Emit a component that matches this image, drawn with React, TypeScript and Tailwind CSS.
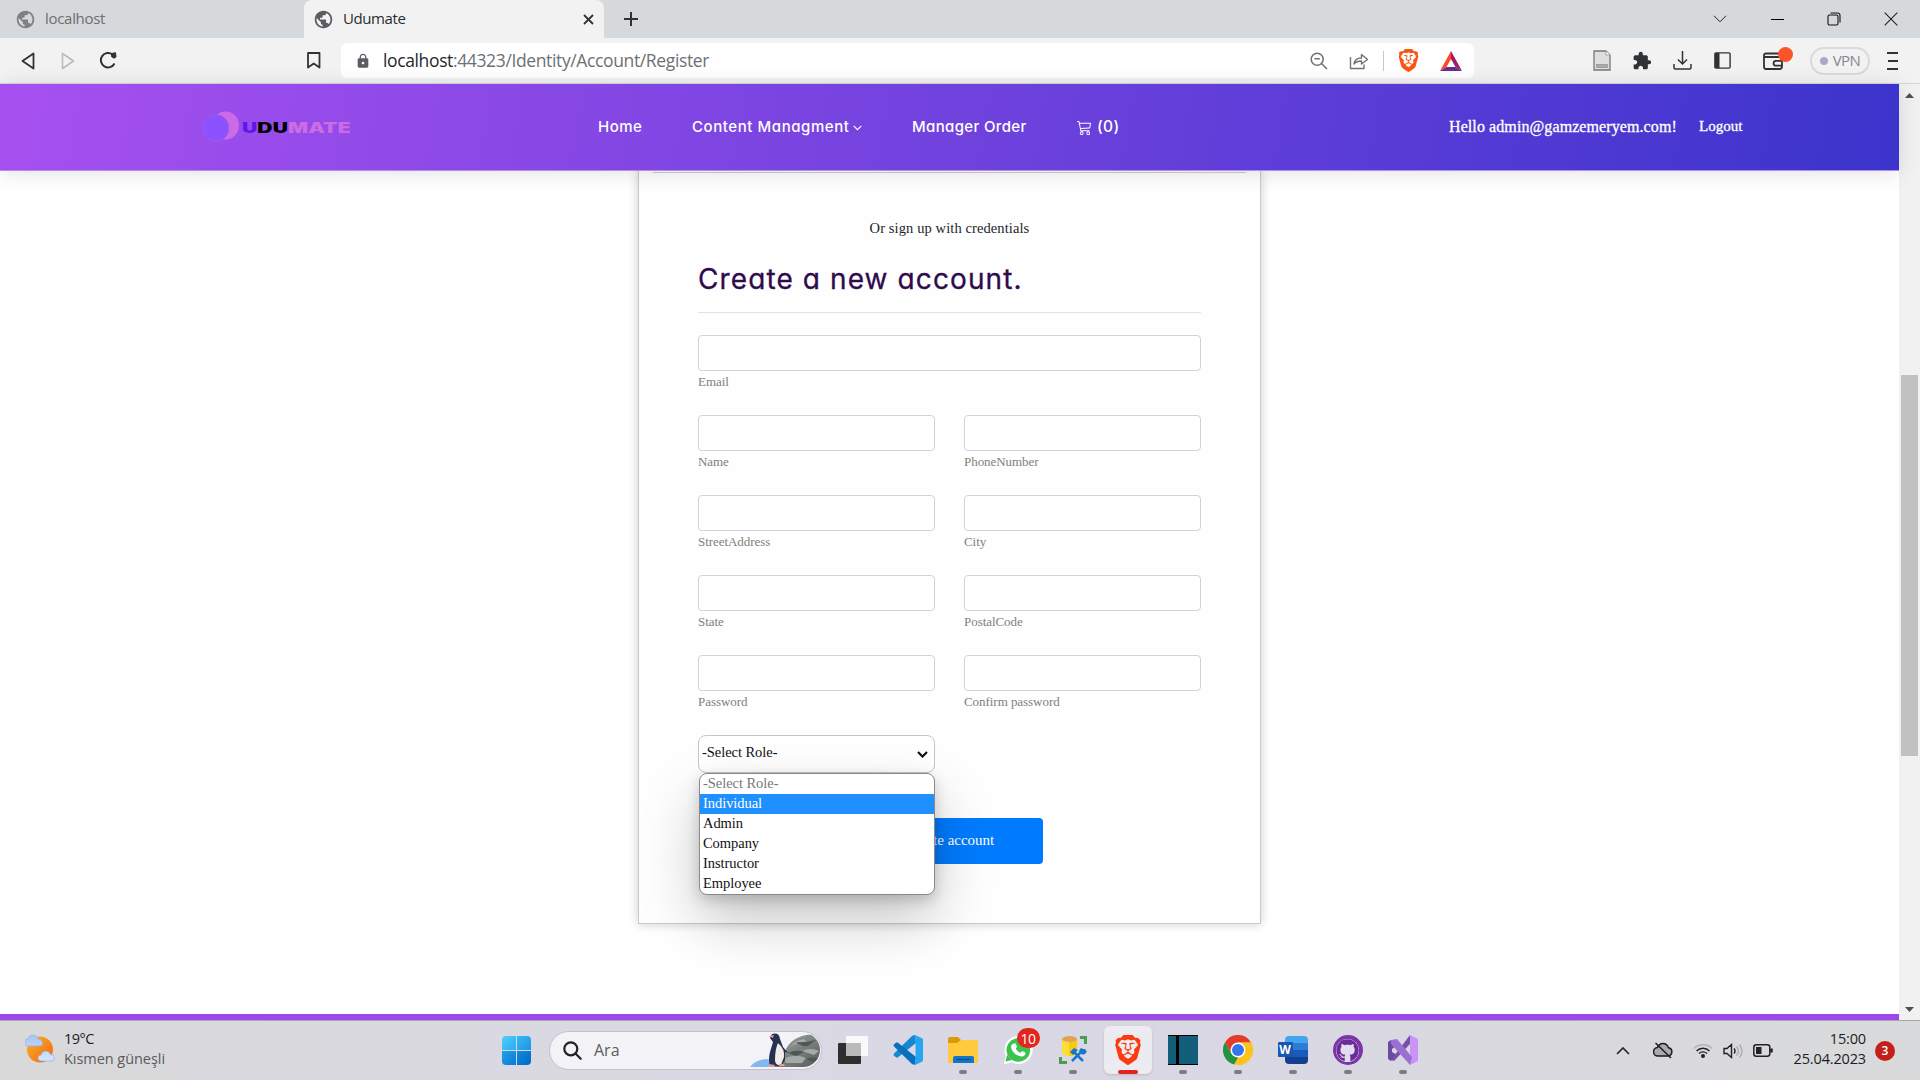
import React from "react";
import { MdPublic, MdLock, MdExtension } from "react-icons/md";
import { SiBrave } from "react-icons/si";
import { FaGithub } from "react-icons/fa";
import { BsCart3 } from "react-icons/bs";

function Cell({ w, children }: { w: string; children?: React.ReactNode }) {
  return <div className={`flex h-full shrink-0 items-center justify-center ${w}`}>{children}</div>;
}

function TabStrip() {
  return (
    <div className="flex h-[38px] bg-[#d5d9dc] font-['Open_Sans',sans-serif] text-[15px]">
      <div className="flex w-[304px] items-center pl-[15px] text-[#6b6e70]">
        <MdPublic className="size-[21px] text-[#7f8081]" />
        <span className="-mt-px ml-[9px] tracking-[-0.3px]">localhost</span>
      </div>
      <div className="flex w-[300px] items-center rounded-t-lg bg-[#f2f2f2] pl-[9px] text-[#2a2d30]">
        <MdPublic className="size-[21px] text-[#5a5e63]" />
        <span className="-mt-px ml-[9px] tracking-[-0.4px]">Udumate</span>
        <svg className="ml-auto mr-[10px]" width="11" height="11" viewBox="0 0 11 11" stroke="#303336" strokeWidth="1.8">
          <path d="M1 1l9 9M10 1l-9 9" />
        </svg>
      </div>
      <Cell w="w-[54px]">
        <svg width="14" height="14" viewBox="0 0 14 14" stroke="#303336" strokeWidth="2">
          <path d="M7 0v14M0 7h14" />
        </svg>
      </Cell>
      <div className="ml-auto flex">
        <Cell w="w-[56px]">
          <svg width="14" height="8" viewBox="0 0 14 8" fill="none" stroke="#222">
            <path d="M1 .8l6 6 6-6" />
          </svg>
        </Cell>
        <Cell w="w-[58px]"><div className="h-px w-[13px] bg-black" /></Cell>
        <Cell w="w-[56px]">
          <svg width="14" height="14" viewBox="0 0 14 14" fill="none" stroke="#111" strokeWidth="1.1">
            <rect x="1" y="3" width="10" height="10" rx="1.5" />
            <path d="M3.5 1h7A2.5 2.5 0 0 1 13 3.500v7" />
          </svg>
        </Cell>
        <Cell w="w-[58px]">
          <svg width="14" height="14" viewBox="0 0 14 14" stroke="#222" strokeWidth="1.1">
            <path d="M.7.7l12.600 12.600M13.300.7L.7 13.300" />
          </svg>
        </Cell>
      </div>
    </div>
  );
}

function Toolbar() {
  return (
    <div className="flex h-[46px] items-center border-b border-[#d3d6da] bg-[#f2f2f2] font-['Open_Sans',sans-serif]">
      <div className="w-[8px]" />
      <Cell w="w-[40px]">
        <svg width="14" height="18" viewBox="0 0 14 18" fill="none" stroke="#303336" strokeWidth="1.8" strokeLinejoin="round">
          <path d="M12.500 1.500v15L1.500 9z" />
        </svg>
      </Cell>
      <Cell w="w-[40px]">
        <svg width="14" height="18" viewBox="0 0 14 18" fill="none" stroke="#b9bbbd" strokeWidth="1.600" strokeLinejoin="round">
          <path d="M1.500 1.500v15L12.500 9z" />
        </svg>
      </Cell>
      <Cell w="w-[40px]">
        <svg className="-mt-[2px]" width="18" height="18" viewBox="0 0 18 18" fill="none" stroke="#303336" strokeWidth="2">
          <path d="M15.500 12.500A7.200 7.200 0 1 1 13.500 3.500" />
          <path d="M12.500 2.500l4-.8.500 4-1.500 1.500-2.700-1.200z" fill="#303336" strokeWidth="1" />
        </svg>
      </Cell>
      <div className="w-[166px]" />
      <Cell w="w-[39px]">
        <svg width="14" height="17" viewBox="0 0 14 17" fill="none" stroke="#303336" strokeWidth="1.800" strokeLinejoin="round">
          <path d="M1 1h11.500v14.500L6.750 11.500 1 15.500z" />
        </svg>
      </Cell>
      <div className="ml-[8px] flex h-[35px] w-[1133px] items-center rounded-md bg-white">
        <div className="ml-[13px] flex w-[18px] justify-center">
          <MdLock className="size-[16px] text-[#5a5e63]" />
        </div>
        <span className="ml-[11px] text-[17.5px] tracking-[-0.37px] text-[#6d7175]">
          <span className="text-[#25282b]">localhost</span>:44323/Identity/Account/Register
        </span>
        <div className="ml-auto flex h-full items-center">
          <Cell w="w-[40px]">
            <svg width="18" height="18" viewBox="0 0 18 18" fill="none" stroke="#707376" strokeWidth="1.500">
              <circle cx="7.200" cy="7.200" r="6" />
              <path d="M11.500 11.500l5.500 5.500M4.500 6.800h5.400" />
            </svg>
          </Cell>
          <Cell w="w-[40px]">
            <svg width="20" height="18" viewBox="0 0 20 18" fill="none" stroke="#707376" strokeWidth="1.400" strokeLinejoin="round">
              <path d="M1.500 5v11.500h13.500v-4M5 12c.5-4.500 3-6 7.500-6V2.500l6 5-6 4.500V9C9 9 7 9.500 5 12z" />
            </svg>
          </Cell>
          <div className="mx-[4px] h-[20px] w-px bg-[#c6c8ca]" />
          <Cell w="w-[40px]"><SiBrave className="size-[23px] text-[#fb5415]" /></Cell>
          <Cell w="w-[46px]">
            <svg width="22" height="20" viewBox="0 0 22 20">
              <path d="M11 0L0 20l6.500-4L11 8z" fill="#ff4724" />
              <path d="M11 0l11 20-6.500-4L11 8z" fill="#9e1f63" />
              <path d="M0 20h22l-6.500-4h-9z" fill="#662d91" />
            </svg>
          </Cell>
        </div>
      </div>
      <div className="w-[108px]" />
      <Cell w="w-[40px]">
        <svg width="18" height="21" viewBox="0 0 18 21">
          <path d="M1 1h12l4 4v15H1z" fill="#dedede" stroke="#777" strokeWidth="1.300" />
          <rect x="3.500" y="14.500" width="11" height="3" fill="#aaa" stroke="#888" strokeWidth=".6" />
          <path d="M13 1v4h4" fill="#fff" stroke="#888" strokeWidth=".7" />
        </svg>
      </Cell>
      <Cell w="w-[40px]"><MdExtension className="size-[20px] text-[#303336]" /></Cell>
      <Cell w="w-[40px]">
        <svg width="19" height="19" viewBox="0 0 19 19" fill="none" stroke="#303336" strokeWidth="1.500">
          <path d="M9.500 0v12.500M5 8.500l4.500 4.500L14 8.500M1 13v3.500q0 1.500 1.500 1.500h14q1.500 0 1.500-1.500V13" />
        </svg>
      </Cell>
      <Cell w="w-[40px]">
        <svg width="17" height="17" viewBox="0 0 17 17">
          <rect x=".9" y=".9" width="15.200" height="15.200" rx="1" fill="none" stroke="#303336" strokeWidth="1.400" />
          <path d="M1 1h4.500v15H1z" fill="#303336" />
        </svg>
      </Cell>
      <div className="relative ml-[16px] flex w-[30px] justify-center">
        <svg width="20" height="18" viewBox="0 0 20 18" fill="none" stroke="#303336" strokeWidth="1.800">
          <path d="M19 6v-2.500q0-2-2-2H3Q1 1.500 1 3.500v11q0 2.500 2 2.500h13.500q2.500 0 2.500-2.500M1 5h17M19 8.800h-6a2.400 2.400 0 0 0 0 4.900h6z" />
        </svg>
        <div className="absolute -top-[5px] left-[20px] size-[15px] rounded-full bg-[#fb542b]" />
      </div>
      <div className="ml-[22px] flex h-[28px] w-[60px] items-center justify-center gap-[5px] rounded-full border-2 border-[#d8dadc] text-[15px] text-[#85888d]">
        <span className="size-[8px] shrink-0 rounded-full bg-[#a9abc2]" />
        <span className="-mt-px tracking-[-0.6px]">VPN</span>
      </div>
      <div className="ml-[17px] flex w-[11px] flex-col gap-[6px]">
        <div className="h-[2px] bg-[#303336]" />
        <div className="ml-px h-[2px] bg-[#303336]" />
        <div className="h-[2px] bg-[#303336]" />
      </div>
    </div>
  );
}

function SiteHeader() {
  return (
    <header className="relative z-10 flex h-[87px] shrink-0 items-center border-b border-[#b18df0] bg-[linear-gradient(100deg,#a750f0_0%,#3b34cc_100%)] shadow-[0_2px_20px_rgba(0,0,0,0.12)]">
      <div className="ml-[203px] flex w-[395px] items-center">
        <svg width="37" height="32" viewBox="0 0 37 32">
          <ellipse cx="22.500" cy="14.500" rx="13.500" ry="14" fill="#cb6ce6" />
          <ellipse cx="13" cy="17" rx="12.800" ry="13.500" fill="#8c52ff" stroke="#9c5be8" />
        </svg>
        <span className="ml-[2px] origin-left scale-x-[1.5] font-['Inter',sans-serif] text-[14px] font-black tracking-[0.1px] text-[#cb6ce6]">
          <span className="text-[#5e17eb]">U</span><span className="text-black">DU</span>MATE
        </span>
      </div>
      <nav className="flex items-center font-['Inter',sans-serif] text-[15px] font-medium whitespace-nowrap text-white [font-feature-settings:'cv11']">
        <span className="w-[94px] tracking-[0.5px]">Home</span>
        <span className="flex w-[220px] items-center gap-[3px] tracking-[0.57px]">
          Content Managment
          <svg className="mt-[2px]" width="9" height="6" viewBox="0 0 9 6" fill="none" stroke="#fff" strokeWidth="1.200"><path d="M.7.8l3.800 3.800L8.300.8" /></svg>
        </span>
        <span className="w-[165px] tracking-[0.35px]">Manager Order</span>
        <span className="flex items-center gap-[5px]">
          <BsCart3 className="size-[15px]" /><span className="-mt-px text-[15.500px] tracking-[0.4px]">(0)</span>
        </span>
      </nav>
      <div className="ml-auto flex w-[450px] items-center font-['Liberation_Serif',serif] text-[16px] whitespace-nowrap text-white [-webkit-text-stroke:0.3px_white]">
        <span className="w-[250px] tracking-[0.09px]">Hello admin@gamzemeryem.com!</span>
        <span className="-mt-[2px] text-[15px]">Logout</span>
      </div>
    </header>
  );
}

function Field({ label }: { label: string }) {
  return (
    <div className="h-[80px] flex-1">
      <div className="h-[36px] rounded border border-[#ced4da] bg-white" />
      <div className="mt-[2px] text-[13px] leading-[18px] tracking-[-0.05px] text-[#808080]">{label}</div>
    </div>
  );
}

const pairs = [
  ["Name", "PhoneNumber"],
  ["StreetAddress", "City"],
  ["State", "PostalCode"],
  ["Password", "Confirm password"],
];
const roles = ["Admin", "Company", "Instructor", "Employee"];

function RegisterCard() {
  return (
    <section className="mx-auto h-[753px] w-[623px] border border-t-0 border-[#c9c9c9] bg-[#fefefe] font-['Liberation_Serif',serif] shadow-[0_0_10px_rgba(0,0,0,0.2)]">
      <div className="mx-[14px] mt-px h-px bg-[#cfcfcf]" />
      <p className="mt-[44px] text-center text-[14.500px] leading-[22px] tracking-[0.1px] text-[#212529]">Or sign up with credentials</p>
      <div className="mx-[59px]">
        <h1 className="mt-[22px] font-['Inter',sans-serif] text-[28px] leading-[36px] font-normal tracking-[1.1px] whitespace-nowrap text-[#2f0a4c] [-webkit-text-stroke:0.3px_#2f0a4c] [font-feature-settings:'cv11']">Create a new account.</h1>
        <div className="mt-[15px] h-px bg-[#e3e3e3]" />
        <div className="mt-[22px] flex"><Field label="Email" /></div>
        {pairs.map(([a, b]) => (
          <div key={a} className="flex gap-[29px]">
            <Field label={a} />
            <Field label={b} />
          </div>
        ))}
        <div className="relative flex h-[38px] w-[237px] items-center rounded-lg border border-[#c6c6c6] bg-white pr-[6px] pl-[3px] text-[14.500px] text-[#111]">
          <span className="-mt-[2px] tracking-[-0.05px]">-Select Role-</span>
          <svg className="ml-auto" width="11" height="7" viewBox="0 0 11 7" fill="none" stroke="#111" strokeWidth="2.200"><path d="M1 1l4.500 4.500L10 1" /></svg>
          <div className="absolute top-[37px] left-0 z-10 h-[122px] w-[236px] rounded-lg border border-[#8a8a8a] bg-white leading-[18px] tracking-[-0.05px] shadow-[0_26px_58px_rgba(0,0,0,0.22),0_5px_14px_rgba(0,0,0,0.18)]">
            <div className="h-[20px] px-[3px] text-[#777]">-Select Role-</div>
            <div className="h-[20px] bg-[#1e90ff] px-[3px] text-white">Individual</div>
            {roles.map((r) => (
              <div key={r} className="h-[20px] px-[3px]">{r}</div>
            ))}
          </div>
        </div>
        <div className="mx-auto mt-[45px] flex h-[46px] w-[187px] items-center justify-center rounded bg-[#007bff] pb-[2px] text-[15px] text-white">Create account</div>
      </div>
    </section>
  );
}

function ScrollBar() {
  return (
    <div className="flex w-[21px] flex-col items-center bg-[#f1f1f1]">
      <svg className="mt-[9px]" width="9" height="5" viewBox="0 0 9 5"><path d="M0 5l4.500-5L9 5z" fill="#505050" /></svg>
      <div className="mt-[277px] h-[381px] w-[17px] bg-[#c1c1c1]" />
      <svg className="mt-auto mb-[8px]" width="9" height="5" viewBox="0 0 9 5"><path d="M0 0l4.500 5L9 0z" fill="#505050" /></svg>
    </div>
  );
}

function TaskApp({ children, active, off }: { children: React.ReactNode; active?: boolean; off?: boolean }) {
  return (
    <div className="flex h-full w-[55px] justify-center">
      <div className={active ? "mt-[5px] flex h-[48px] w-[48px] flex-col items-center rounded-md bg-[#ecebf2] pt-[9px] shadow-sm" : "mt-[5px] flex h-[48px] w-[48px] flex-col items-center pt-[9px]"}>
        {children}
        {!off && <div className={active ? "mt-[5px] h-[4px] w-[20px] rounded-full bg-[#e0261d]" : "mt-[5px] h-[4px] w-[8px] rounded-full bg-[#7e7c83]"} />}
      </div>
    </div>
  );
}

function Penguin() {
  return (
    <svg width="70" height="34" viewBox="0 0 70 34">
      <defs>
        <linearGradient id="rock" x1="0" y1="0" x2="1" y2="1">
          <stop offset="0" stopColor="#a5aaa7" /><stop offset=".5" stopColor="#7b817e" /><stop offset="1" stopColor="#565b5a" />
        </linearGradient>
      </defs>
      <path d="M0 34q6-8 18-8l8 8z" fill="#85b8f0" />
      <path d="M24 34q2-8 10-12Q37 8 52 3q9-3 16 0l2 5v26z" fill="url(#rock)" />
      <path d="M40 14q8-6 18-4l-4-4q-10 2-14 8M34 26q10-6 22-1l-4 5H36zM52 18q9-4 17 0l-5 4z" fill="#a5aaa7" />
      <path d="M46 9q8 1 20-2l-8 6q-7 1-12-4M38 20q8-4 16-1l-8 4zM56 26q6-3 13 0l-6 3z" fill="#505654" />
      <path d="M22 1q7-2 8 5l3 8q4 5 6 6l-4-1v8l-4 6H20q-2-6 0-14l3-10-3-4z" fill="#26304f" />
      <path d="M28 10q7 6 6 14l-3 8q-6 1-6-5 0-11 3-17z" fill="#f1ece8" />
      <path d="M19 3l5-1-1 3zM19 31l6 1-1 2h-5zM29 31l5 0 1 2h-6z" fill="#e79a8d" />
    </svg>
  );
}

function Taskbar() {
  return (
    <footer className="flex h-[60px] items-center border-t border-[#a9a7aa] bg-[linear-gradient(90deg,#d9d9da_0%,#dad9e2_30%,#dad7e5_60%,#d9d9de_80%,#d9dadb_100%)] font-['Open_Sans',sans-serif]">
      <div className="flex w-[502px] items-center pl-[25px]">
        <svg className="-mt-[4px]" width="31" height="30" viewBox="0 0 31 30">
          <defs>
            <linearGradient id="sun" x1="0" y1="0" x2="1" y2="1"><stop stopColor="#f7b52c" /><stop offset="1" stopColor="#f4640d" /></linearGradient>
            <linearGradient id="cl" x1="0" y1="0" x2="0" y2="1"><stop stopColor="#a8c4ee" /><stop offset="1" stopColor="#d7e6ff" /></linearGradient>
          </defs>
          <circle cx="15" cy="15.500" r="13" fill="url(#sun)" />
          <path d="M3 12a3.500 3.500 0 0 1 0-7Q4 1 8 1t5 4q4 0 4.500 3.500T14 12zM16 27a3 3 0 0 1 0-6q1-4 5-4 3 0 4.500 3.500 4 0 4 3.200T26 27z" fill="url(#cl)" stroke="#8fb0e6" strokeWidth=".7" />
        </svg>
        <div className="-mt-[3px] ml-[8px] text-[14.500px] leading-[20px] text-[#1c1c1c]">
          <div className="tracking-[-0.5px]">19°C</div>
          <div className="tracking-[-0.05px] text-[#5a5a5c]">Kısmen güneşli</div>
        </div>
      </div>
      <div className="grid size-[29px] grid-cols-2 gap-px">
        <div className="rounded-tl-sm bg-linear-to-br from-[#4fd0fb] to-[#2aaaf0]" />
        <div className="rounded-tr-sm bg-linear-to-br from-[#38b9f3] to-[#1c94e2]" />
        <div className="rounded-bl-sm bg-linear-to-br from-[#22a2ea] to-[#0979d4]" />
        <div className="rounded-br-sm bg-linear-to-br from-[#138bdc] to-[#0068c8]" />
      </div>
      <div className="-mt-px ml-[18px] flex h-[39px] w-[273px] items-center rounded-full border border-[#c3c1cb] bg-[#f3f3f7] pl-[13px]">
        <svg width="19" height="19" viewBox="0 0 19 19" fill="none" stroke="#222" strokeWidth="2.200" strokeLinecap="round"><circle cx="7.800" cy="7.800" r="6.500" /><path d="M12.700 12.700l5 5" /></svg>
        <span className="ml-[12px] text-[16px] text-[#5c5c60]">Ara</span>
        <div className="mr-px ml-auto overflow-hidden rounded-r-full"><Penguin /></div>
      </div>
      <div className="ml-[3px] flex h-full">
        <TaskApp off>
          <svg width="30" height="30" viewBox="0 0 30 30">
            <rect x="0" y="8" width="23" height="21" rx="1" fill="#302f30" />
            <rect x="8" y="1" width="22" height="20" rx="1" fill="#f9f9fa" />
            <path d="M8 8h15v13H8z" fill="#bababb" />
          </svg>
        </TaskApp>
        <TaskApp off>
          <svg width="30" height="30" viewBox="0 0 30 30">
            <path d="M22 0l-3 1L1 18.500q-1 1.200 0 2.200l2 1.600q1 .8 2 0L23 8z" fill="#1488d4" />
            <path d="M22 30l-3-1L1 11.500q-1-1.200 0-2.200l2-1.600q1-.8 2 0L23 22z" fill="#0a70bd" />
            <path d="M22 0l7 3.200q1 .6 1 1.800v20q0 1.200-1 1.800L22 30q-2 0-3-1 3 1 3.500-2V3Q22 0 19 1q1-1 3-1z" fill="#27a4f2" />
          </svg>
        </TaskApp>
        <TaskApp>
          <svg width="30" height="30" viewBox="0 0 30 30">
            <path d="M0 4q0-2 2-2h8l3 3h15q2 0 2 2v8H0z" fill="#dd9a07" />
            <path d="M0 8h9l4-3h17v23H0z" fill="#ffca3c" />
            <path d="M5 28v-5q0-2 2-2h17q2 0 2 2v5z" fill="#1476cb" />
            <path d="M8.500 24.500h14" stroke="#0b4c91" strokeWidth="1.200" />
          </svg>
        </TaskApp>
        <TaskApp>
          <div className="relative">
            <svg width="30" height="30" viewBox="0 0 30 30">
              <path d="M15.500 1A14 14 0 1 1 9 27.300L.5 29.500 2.800 21A14 14 0 0 1 15.500 1z" fill="#fff" />
              <circle cx="15.300" cy="15" r="11.800" fill="#3bc24f" /><path d="M4 20l-1.500 6.500L9 25z" fill="#3bc24f" />
              <path d="M10.500 8.500l2-.2 1.500 3.500-1.300 1.800q1.500 3 4.700 4.300l1.700-1.800 3.400 1.600q0 3.500-4 3.700-8.500-1-10.500-9.400-.2-2 2.500-3.500z" fill="#fff" />
            </svg>
            <div className="absolute -top-[7px] left-[14px] flex h-[20px] w-[23px] items-center justify-center rounded-full bg-[#e0261d] text-[14px] tracking-[-0.5px] text-white">10</div>
          </div>
        </TaskApp>
        <TaskApp>
          <svg width="30" height="30" viewBox="0 0 30 30">
            <path d="M4 4h15v15q-7.500 4-15 0z" fill="#fbdc3b" /><path d="M11 4h8v15q-4 2-8 2z" fill="#f8c90c" />
            <ellipse cx="11.500" cy="4" rx="7.500" ry="3" fill="#e3a252" />
            <path d="M22 2.500h5.500V9M2.500 22v5.500H9" fill="none" stroke="#4c9d50" strokeWidth="3" />
            <path d="M14 26l8-8M15 16l10 10" stroke="#1877cc" strokeWidth="2.500" /><path d="M12 17l4-4 4 2-5 5zM22 14l3 3 3-3M23 13q-4 4 0 6t6-3" fill="#1877cc" />
          </svg>
        </TaskApp>
        <TaskApp active><SiBrave className="size-[30px] text-[#fb3a10]" /></TaskApp>
        <TaskApp>
          <div className="flex h-[30px] w-[30px] border-y border-black bg-[#135e78]"><div className="ml-[8px] w-[3px] bg-black" /></div>
        </TaskApp>
        <TaskApp>
          <svg width="30" height="30" viewBox="0 0 30 30">
            <circle cx="15" cy="15" r="15" fill="#fcc31e" />
            <path d="M2 7.500A15 15 0 0 1 28 7.500H15L8.500 18.500z" fill="#e33b2e" />
            <path d="M2 7.500l6.500 11.200 6.500 3.800-4 7A15 15 0 0 1 2 7.500z" fill="#229342" />
            <path d="M15 7.500h13a15 15 0 0 1-14 22.500l7.500-11.200z" fill="#fcc31e" />
            <circle cx="15" cy="15" r="7.500" fill="#fff" /><circle cx="15" cy="15" r="6" fill="#3576f0" />
          </svg>
        </TaskApp>
        <TaskApp>
          <div className="relative h-[30px] w-[30px]">
            <div className="ml-[7px] flex h-[30px] w-[23px] flex-col py-px">
              <div className="flex-1 rounded-t-sm bg-[#43a5ee]" /><div className="flex-1 bg-[#2b7cd4]" /><div className="flex-1 bg-[#195abd]" /><div className="flex-1 rounded-b-sm bg-[#113f91]" />
            </div>
            <div className="absolute top-[7px] left-0 flex size-[15px] items-center justify-center rounded-[1px] bg-[#1b56b3] text-[12px] font-bold text-white">W</div>
          </div>
        </TaskApp>
        <TaskApp>
          <div className="flex size-[30px] shrink-0 items-center justify-center rounded-full bg-[#7a35a6]">
            <div className="flex size-[23px] items-center justify-center rounded-full bg-[#e3dcef]"><FaGithub className="size-[23px] text-[#6b2c9b]" /></div>
          </div>
        </TaskApp>
        <TaskApp>
          <svg width="30" height="30" viewBox="0 0 30 30">
            <path d="M0 7l3-2 6 5-5 4v3l5 3-6 6-3-2z" fill="#694a9e" />
            <path d="M3 25l19-25v9L6 26z" fill="#7850ac" />
            <path d="M22 0l8 4v22l-8 4z" fill="#c993f8" />
            <path d="M3 5l6-1 15 18-2 8L3 9z" fill="#9b70d3" />
          </svg>
        </TaskApp>
      </div>
      <div className="ml-auto flex h-full items-center pr-[25px]">
        <Cell w="w-[40px]"><svg width="14" height="8" viewBox="0 0 14 8" fill="none" stroke="#222" strokeWidth="1.600"><path d="M1 7l6-6 6 6" /></svg></Cell>
        <Cell w="w-[40px]">
          <svg width="20" height="17" viewBox="0 0 20 17" fill="none" stroke="#1b1b1b" strokeWidth="1.500">
            <path d="M5 14a4.200 4.200 0 0 1-.5-8.400Q6 1.500 10 1.500t5.500 4.200A4.200 4.200 0 0 1 15 14z" fill="#aaa9ac" /><path d="M2.500 1l15.500 15" />
          </svg>
        </Cell>
        <Cell w="w-[40px]">
          <svg width="20" height="15" viewBox="0 0 20 15" fill="none" stroke="#222" strokeWidth="1.400">
            <path d="M.8 5.500a13 13 0 0 1 18.400 0" stroke="#b3b2b5" /><path d="M3.500 8a9 9 0 0 1 13 0M6 10.600a5.600 5.600 0 0 1 8 0" /><circle cx="10" cy="13" r="1.300" fill="#222" />
          </svg>
        </Cell>
        <Cell w="w-[20px]">
          <svg width="20" height="16" viewBox="0 0 20 16" fill="none" stroke="#222" strokeWidth="1.400">
            <path d="M1 5.500h3L8.500 1.500v13L4 10.500H1zM11 5.500q2 2.500 0 5" /><path d="M13.500 3.500q4 4.500 0 9M16.500 1.500q5 6.500 0 13" stroke="#acabae" />
          </svg>
        </Cell>
        <Cell w="w-[40px]">
          <svg width="20" height="13" viewBox="0 0 20 13" fill="none" stroke="#222" strokeWidth="1.500">
            <rect x=".8" y=".8" width="16" height="11.400" rx="2.500" /><path d="M3 3h5.500v7H3z" fill="#222" stroke="none" /><path d="M18.500 4.500v4" strokeWidth="2.500" />
          </svg>
        </Cell>
        <div className="-mt-[3px] w-[83px] text-right text-[14.500px] leading-[20px] tracking-[-0.15px] text-[#1c1c1c]">
          <div>15:00</div>
          <div>25.04.2023</div>
        </div>
        <div className="ml-[9px] flex size-[20px] items-center justify-center rounded-full bg-[#c3201a] text-[12px] font-semibold text-white">3</div>
      </div>
    </footer>
  );
}

export default function App() {
  return (
    <div className="flex h-[1080px] w-[1920px] flex-col overflow-hidden bg-white">
      <TabStrip />
      <Toolbar />
      <main className="flex h-[936px] shrink-0">
        <div className="flex w-[1899px] flex-col">
          <SiteHeader />
          <RegisterCard />
          <div className="mt-auto h-[6px] bg-[#9b49e9]" />
        </div>
        <ScrollBar />
      </main>
      <Taskbar />
    </div>
  );
}
